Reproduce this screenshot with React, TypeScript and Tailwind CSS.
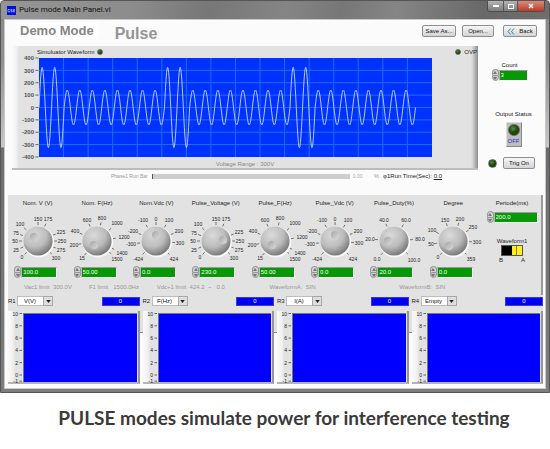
import { useState, type ReactNode } from "react";

type Mark = [label: string, dx: number, dy: number];

type DialSpec = {
  id: string;
  title: string;
  value: string;
  marks: Mark[];
  dimple: [number, number];
};

const VOLT_MARKS: Mark[] = [
  ["0", -16, 16],
  ["25", -22, 9],
  ["50", -23, 0],
  ["75", -22, -8],
  ["100", -18, -17],
  ["150", 0, -22],
  ["175", 10, -22],
  ["225", 23, -9],
  ["250", 24, 0],
  ["275", 23, 9],
  ["300", 18, 17],
];

const FREQ_MARKS: Mark[] = [
  ["15", -15, 17],
  ["200", -23, 4],
  ["400", -22, -10],
  ["600", -10, -21],
  ["800", 5, -23],
  ["1000", 20, -18],
  ["1200", 27, -4],
  ["1400", 25, 12],
  ["1500", 20, 18],
];

const VDC_MARKS: Mark[] = [
  ["-424", -18, 18],
  ["-300", -25, 3],
  ["-200", -23, -10],
  ["-100", -13, -21],
  ["0", 0, -22],
  ["100", 13, -21],
  ["200", 23, -10],
  ["300", 24, 2],
  ["424", 18, 18],
];

const DUTY_MARKS: Mark[] = [
  ["0.0", -17, 18],
  ["20.0", -24, -2],
  ["40.0", -10, -21],
  ["60.0", 12, -21],
  ["80.0", 26, -2],
  ["100.0", 20, 19],
];

const DEGREE_MARKS: Mark[] = [
  ["0", -15, 16],
  ["50", -22, 3],
  ["100", -21, -11],
  ["150", -8, -21],
  ["200", 7, -22],
  ["250", 20, -14],
  ["300", 24, 1],
  ["359", 18, 18],
];

const DIALS: DialSpec[] = [
  { id: "nom-v", title: "Nom. V (V)", value: "100.0", marks: VOLT_MARKS, dimple: [-4, -4] },
  { id: "nom-f", title: "Nom. F(Hz)", value: "50.00", marks: FREQ_MARKS, dimple: [-3, 4] },
  { id: "nom-vdc", title: "Nom.Vdc (V)", value: "0.0", marks: VDC_MARKS, dimple: [0, -6] },
  { id: "pulse-v", title: "Pulse_Voltage (V)", value: "230.0", marks: VOLT_MARKS, dimple: [7, -1] },
  { id: "pulse-f", title: "Pulse_F(Hz)", value: "50.00", marks: FREQ_MARKS, dimple: [-3, 4] },
  { id: "pulse-vdc", title: "Pulse_Vdc (V)", value: "0.0", marks: VDC_MARKS, dimple: [0, -6] },
  { id: "pulse-duty", title: "Pulse_Duty(%)", value: "20.0", marks: DUTY_MARKS, dimple: [-6, 0] },
  { id: "degree", title: "Degree", value: "0.0", marks: DEGREE_MARKS, dimple: [-4, 5] },
];

const READOUTS = [
  { name: "R1", unit: "V(V)" },
  { name: "R2", unit: "F(Hz)" },
  { name: "R3", unit: "I(A)" },
  { name: "R4", unit: "Empty" },
];

const UNITS = ["V(V)", "F(Hz)", "I(A)", "Empty"];

// 30 cycles: two at 325 V, then eight at 141 V, repeated
function wavePath() {
  const pts: string[] = [];
  const period = 12.55;
  for (let i = 0; i <= 30 * 24; i++) {
    const t = i / 24;
    const amp = Math.floor(t) % 10 < 2 ? 40.2 : 17.5;
    const x = t * period;
    const y = 49.5 - amp * Math.sin(t * 2 * Math.PI);
    pts.push(`${x.toFixed(2)},${y.toFixed(2)}`);
  }
  return "M" + pts.join("L");
}

function Led({ className }: { className: string }) {
  return (
    <span
      className={`inline-block shrink-0 rounded-full border border-[#5d6b58] bg-[radial-gradient(circle_at_40%_35%,#5f8a45_0%,#1f4a0c_45%,#12300a_100%)] ${className}`}
    />
  );
}

function Spinner({ name }: { name: string }) {
  return (
    <span className="flex w-[7px] shrink-0 flex-col">
      <button
        aria-label={`${name} up`}
        className="flex h-[6px] items-center justify-center rounded-t-full border border-b-0 border-[#999] bg-[#d2d2d2]"
      >
        <svg viewBox="0 0 4 3" className="h-[3px] w-1">
          <path d="M0 3L2 0L4 3z" fill="#777" />
        </svg>
      </button>
      <button
        aria-label={`${name} down`}
        className="flex h-[6px] items-center justify-center rounded-b-full border border-[#999] bg-[#c4c4c4]"
      >
        <svg viewBox="0 0 4 3" className="h-[3px] w-1">
          <path d="M0 0L2 3L4 0z" fill="#777" />
        </svg>
      </button>
    </span>
  );
}

function NumberField({ id, name, initial, width }: { id: string; name: string; initial: string; width: string }) {
  const [value, setValue] = useState(initial);
  return (
    <div className="flex items-center">
      <Spinner name={name} />
      <input
        id={id}
        value={value}
        onChange={(e) => setValue(e.target.value)}
        className={`h-[11px] border border-t-[#9a9a9a] border-r-[#f4f4f4] border-b-[#f4f4f4] border-l-[#b5b5b5] bg-[#069806] px-px text-[6px] leading-[9px] text-white ${width}`}
      />
    </div>
  );
}

function Dial({ spec }: { spec: DialSpec }) {
  const gid = `knob-${spec.id}`;
  return (
    <div className="flex flex-col items-center">
      <label htmlFor={spec.id} className="text-[6px] leading-2 whitespace-nowrap">
        {spec.title}
      </label>
      <svg viewBox="-30 -32 60 57" className="mt-0.5 h-[57px] w-[60px] overflow-visible">
        <defs>
          <radialGradient id={gid} cx="38%" cy="30%" r="75%">
            <stop offset="0%" stopColor="#dadada" />
            <stop offset="55%" stopColor="#bcbcbc" />
            <stop offset="100%" stopColor="#707070" />
          </radialGradient>
          <linearGradient id={`${gid}-d`} x1="0" y1="0" x2="1" y2="1">
            <stop offset="0%" stopColor="#a4a4a4" />
            <stop offset="100%" stopColor="#dcdcdc" />
          </linearGradient>
        </defs>
        {spec.marks.map(([label, dx, dy]) => {
          const r = Math.hypot(dx, dy);
          return (
            <g key={label}>
              <line
                x1={(dx / r) * 16}
                y1={(dy / r) * 16}
                x2={(dx / r) * 19}
                y2={(dy / r) * 19}
                stroke="#555"
                strokeWidth="0.8"
              />
              <text x={dx} y={dy + 2} textAnchor="middle" fontSize="5" fill="#222">
                {label}
              </text>
            </g>
          );
        })}
        <circle cx="0.8" cy="1" r="15.4" fill="#f8f8f8" />
        <circle r="14.6" fill={`url(#${gid})`} />
        <circle cx={spec.dimple[0]} cy={spec.dimple[1]} r="4.2" fill={`url(#${gid}-d)`} />
      </svg>
      <div className="pr-1">
        <NumberField id={spec.id} name={spec.title} initial={spec.value} width="w-[36px]" />
      </div>
    </div>
  );
}

function PanelButton({ children, className = "" }: { children: ReactNode; className?: string }) {
  return (
    <button
      className={`flex h-3 items-center justify-center rounded-[2px] border border-[#8e8e8e] bg-gradient-to-b from-[#f6f6f6] to-[#d4d4d4] text-[6px] leading-2 text-[#111] ${className}`}
    >
      {children}
    </button>
  );
}

function TitleBar() {
  return (
    <header className="flex h-[18px] items-start justify-between bg-[linear-gradient(100deg,#959595_0%,#8c8c8c_24%,#777_38%,#858585_52%,#777_62%,#858585_72%,#686868_88%,#6e6e6e_100%)] pl-[6px] pr-1">
      <div className="flex items-center gap-[3px] pt-[3px]">
        <svg viewBox="0 0 9 9" className="size-[9px]">
          <rect width="9" height="9" fill="#0010e0" />
          <path
            d="M2.6 3.5H1v2.4h1.6V4.8M5.2 3.5H3.8v1.1h1.4v1.3H3.6M8 3.5H6.4v2.4H8M6.4 4.7H8"
            fill="none"
            stroke="#dfe6ff"
            strokeWidth="0.6"
          />
        </svg>
        <h1 className="font-['Roboto',sans-serif] text-[8px] leading-3 text-[#111]">
          Pulse mode Main Panel.vi
        </h1>
      </div>
      <div className="flex h-[11px] overflow-hidden rounded-b-[3px] border border-t-0 border-[#4d4d4d]">
        <button aria-label="Minimize" className="flex w-4 items-center justify-center border-r border-[#555] bg-gradient-to-b from-[#b5b5b5] to-[#7c7c7c]">
          <span className="h-0.5 w-1.5 bg-white" />
        </button>
        <button aria-label="Maximize" className="flex w-[14px] items-center justify-center border-r border-[#555] bg-gradient-to-b from-[#b5b5b5] to-[#7c7c7c]">
          <span className="h-[5px] w-1.5 border border-white" />
        </button>
        <button aria-label="Close" className="flex w-[26px] items-center justify-center bg-gradient-to-b from-[#d98a7c] to-[#bb3a22]">
          <svg viewBox="0 0 6 6" className="size-[6px]">
            <path d="M1 1l4 4M5 1l-4 4" stroke="#fff" strokeWidth="1.4" />
          </svg>
        </button>
      </div>
    </header>
  );
}

function WaveformPanel() {
  const ticks = [400, 300, 200, 100, 0, -100, -200, -300, -400];
  return (
    <section className="border-b-2 border-[#bcbcbc] bg-[linear-gradient(90deg,#fafafa_0px,#f2f2f2_4px,#e2e2e2_7px,#e2e2e2_calc(100%-7px),#cfcfcf_calc(100%-5px),#8c8c8c_100%)]">
      <div className="flex h-3 items-center justify-between pr-px pl-[25px] text-[6px]">
        <span className="flex items-center gap-[3px]">
          Simuluator Waveform
          <Led className="size-1.5" />
        </span>
        <span className="flex items-center gap-[3px]">
          <Led className="size-1.5" />
          OVP
        </span>
      </div>
      <div className="flex pr-[46px] pl-[9px]">
        <svg viewBox="0 0 18 99" className="h-[99px] w-[18px] shrink-0 overflow-visible">
          {ticks.map((t, i) => (
            <g key={t}>
              <text x="13" y={i * 12.37 + 2.2} textAnchor="end" fontSize="6" fontWeight="bold" fill="#555">
                {t}
              </text>
              <line x1="14.5" x2="17.5" y1={i * 12.37} y2={i * 12.37} stroke="#444" strokeWidth="0.8" />
            </g>
          ))}
        </svg>
        <svg viewBox="0 0 393 99" preserveAspectRatio="none" className="h-[99px] min-w-0 flex-1 bg-[#0032ff]">
          {Array.from({ length: 15 }, (_, i) => (
            <line key={`v${i}`} x1={(i + 1) * 24.56} x2={(i + 1) * 24.56} y1="0" y2="99" stroke="#1f6cff" />
          ))}
          {Array.from({ length: 7 }, (_, i) => (
            <line key={`h${i}`} x1="0" x2="393" y1={(i + 1) * 12.37} y2={(i + 1) * 12.37} stroke="#1f6cff" />
          ))}
          <path d={wavePath()} fill="none" stroke="#c9d6ff" strokeWidth="0.9" />
        </svg>
      </div>
      <p className="pt-[3px] text-center text-[6px] leading-2 text-[#888]">Voltage Range : 300V</p>
    </section>
  );
}

function SideControls() {
  return (
    <aside className="flex w-[68px] shrink-0 flex-col items-center pr-[5px] text-[6px] leading-2">
      <label htmlFor="count" className="pt-[15px]">
        Count
      </label>
      <NumberField id="count" name="Count" initial="3" width="w-[29px]" />
      <span className="pt-[29px] pl-2">Output Status</span>
      <button className="mt-1 ml-2 flex h-[25px] w-4 flex-col items-center border border-t-[#ddd] border-r-[#888] border-b-[#888] border-l-[#ddd] bg-[#bdbdbd] pt-px">
        <Led className="size-3" />
        <span className="pt-px text-[#2a2ae0]">OFF</span>
      </button>
      <div className="mt-2.5 flex items-center gap-1.5 pl-1">
        <Led className="size-[9px]" />
        <PanelButton className="w-8">Trig On</PanelButton>
      </div>
    </aside>
  );
}

function Readout({ name, unit }: { name: string; unit: string }) {
  const id = `unit-${name}`;
  return (
    <div className="flex flex-col">
      <div className="flex h-3 items-center">
        <label htmlFor={id} className="w-[9px] text-[6px]">
          {name}
        </label>
        <span className="relative flex">
          <select
            id={id}
            defaultValue={unit}
            className="h-2.5 w-[36px] appearance-none border border-[#bdbdbd] bg-white pr-2.5 text-center text-[6px] leading-2 text-[#111]"
          >
            {UNITS.map((u) => (
              <option key={u}>{u}</option>
            ))}
          </select>
          <span className="pointer-events-none absolute inset-y-0 right-0 flex w-2.5 items-center justify-center border border-[#a8a8a8] bg-[#dedede]">
            <svg viewBox="0 0 6 4" className="h-[3px] w-[5px]">
              <path d="M0 0h6L3 4z" fill="#222" />
            </svg>
          </span>
        </span>
        <output
          htmlFor={id}
          className="ml-auto h-[9px] w-[38px] border border-[#3a3ad0] bg-[#0000f4] text-center text-[6px] leading-[7px] text-white"
        >
          0
        </output>
      </div>
      <div className="mt-1 flex border-r-2 border-b-2 border-r-[#969696] border-b-[#b4b4b4] bg-[linear-gradient(90deg,#fafafa_0px,#f0f0f0_5px,#e2e2e2_7px)] pt-0.5 pr-px">
        <svg viewBox="0 0 15 69" className="h-[69px] w-[15px] shrink-0 overflow-visible">
          {[10, 8, 6, 4, 2, 0, -1].map((t) => {
            const y = (10 - t) * 6.15 + 0.5;
            return (
              <g key={t}>
                <text x="10" y={y + 2} textAnchor="end" fontSize="5" fill="#222">
                  {t}
                </text>
                <line x1="11.5" x2="14" y1={y} y2={y} stroke="#444" strokeWidth="0.8" />
              </g>
            );
          })}
        </svg>
        <div className="h-[69px] flex-1 border-t border-l border-[#777] bg-[#0000ff]" />
      </div>
    </div>
  );
}

export default function App() {
  return (
    <main className="min-h-screen bg-white font-['Liberation_Sans',Arial,sans-serif] text-[#222]">
      <div className="overflow-hidden rounded-t-[4px] border border-[#555] bg-[linear-gradient(#858585_0px,#909090_60px,#c8c8c8_146px,#6c6c6c_147px,#7d7d7d_100%)]">
        <TitleBar />
        <div className="mx-[3px] mb-[3px] border border-[#c8c8c8] bg-[#fbfbfb] pr-[2px] pb-1 pl-[3px]">
          <div className="flex h-[26px] items-start pt-[3px] pr-[6px] pl-[9px]">
            <strong className="bg-white pr-[5px] pl-[3px] text-[13px] leading-4 text-[#858585]">Demo Mode</strong>
            <strong className="ml-4 text-[16px] leading-[22px] text-[#949494]">Pulse</strong>
            <div className="ml-auto flex pt-0.5">
              <PanelButton className="w-[34px]">Save As...</PanelButton>
              <PanelButton className="ml-[6px] w-8">Open...</PanelButton>
              <PanelButton className="ml-[9px] w-[34px] gap-1 border-[#5e86a8]">
                <svg viewBox="0 0 8 7" className="h-[7px] w-2">
                  <path d="M3.6 0.5L1 3.5L3.6 6.5M7 0.5L4.4 3.5L7 6.5" fill="none" stroke="#2f7fb8" />
                </svg>
                Back
              </PanelButton>
            </div>
          </div>

          <div className="flex pl-1">
            <div className="flex flex-1 flex-col">
              <WaveformPanel />
              <div className="flex h-[25px] items-start pt-[2px] pl-[99px] text-[6px] leading-2">
                <span className="text-[5px] text-[#999]">Phase1 Run Bar</span>
                <div
                  role="progressbar"
                  aria-label="Phase1 Run Bar"
                  aria-valuenow={0}
                  className="mt-0.5 ml-1 h-[5px] flex-1 border-l border-[#555] bg-[#cdcdcd]"
                />
                <span className="w-6 pl-[3px] text-[5px] text-[#aaa]">0.00</span>
                <span className="text-[#999]">%</span>
                <span className="pr-[36px] pl-1">
                  φ1Run Time(Sec): <u>0.0</u>
                </span>
              </div>
            </div>
            <SideControls />
          </div>

          <section className="border-r-2 border-[#9a9a9a] bg-[#e2e2e2] pt-1">
            <div className="flex">
              <div className="grid flex-1 grid-cols-8">
                {DIALS.map((d) => (
                  <Dial key={d.id} spec={d} />
                ))}
              </div>
              <div className="flex w-[58px] flex-col items-center text-[6px] leading-2">
                <label htmlFor="period">Periode(ms)</label>
                <div className="pt-1">
                  <NumberField id="period" name="Periode" initial="200.0" width="w-[44px]" />
                </div>
                <span className="pt-[14px]">Waveform1</span>
                <button aria-label="Waveform1" className="flex h-[11px] w-[22px] border border-[#555] bg-[#ffee22]">
                  <span className="h-full w-2.5 bg-black" />
                  <span className="h-full w-[5px] border-r border-[#8a8420]" />
                </button>
                <span className="flex w-[26px] justify-between">
                  <span>B</span>
                  <span>A</span>
                </span>
              </div>
            </div>
            <div className="flex pt-[5px] pb-1 pl-4 text-[6px] leading-2 whitespace-pre text-[#999]">
              <span className="flex-[65]">Vac1 limit  300.0V</span>
              <span className="flex-[68]">F1 limit   1500.0Hz</span>
              <span className="flex-[113]">Vdc+1 limit  424.2  ~   0.0</span>
              <span className="flex-[130]">WaveformA:  SIN</span>
              <span className="flex-[142]">WaveformB:  SIN</span>
            </div>
          </section>

          <div className="grid grid-cols-4 gap-x-[3px] bg-[linear-gradient(#e2e2e2_0px,#e2e2e2_37px,#888_37px,#888_38px,#fbfbfb_38px)]">
            {READOUTS.map((r) => (
              <Readout key={r.name} {...r} />
            ))}
          </div>
        </div>
      </div>
      <p className="pt-[13px] pl-[18px] text-center font-['Lato',sans-serif] text-[19px] leading-6 font-bold text-[#3a3a3a]">
        PULSE modes simulate power for interference testing
      </p>
    </main>
  );
}
